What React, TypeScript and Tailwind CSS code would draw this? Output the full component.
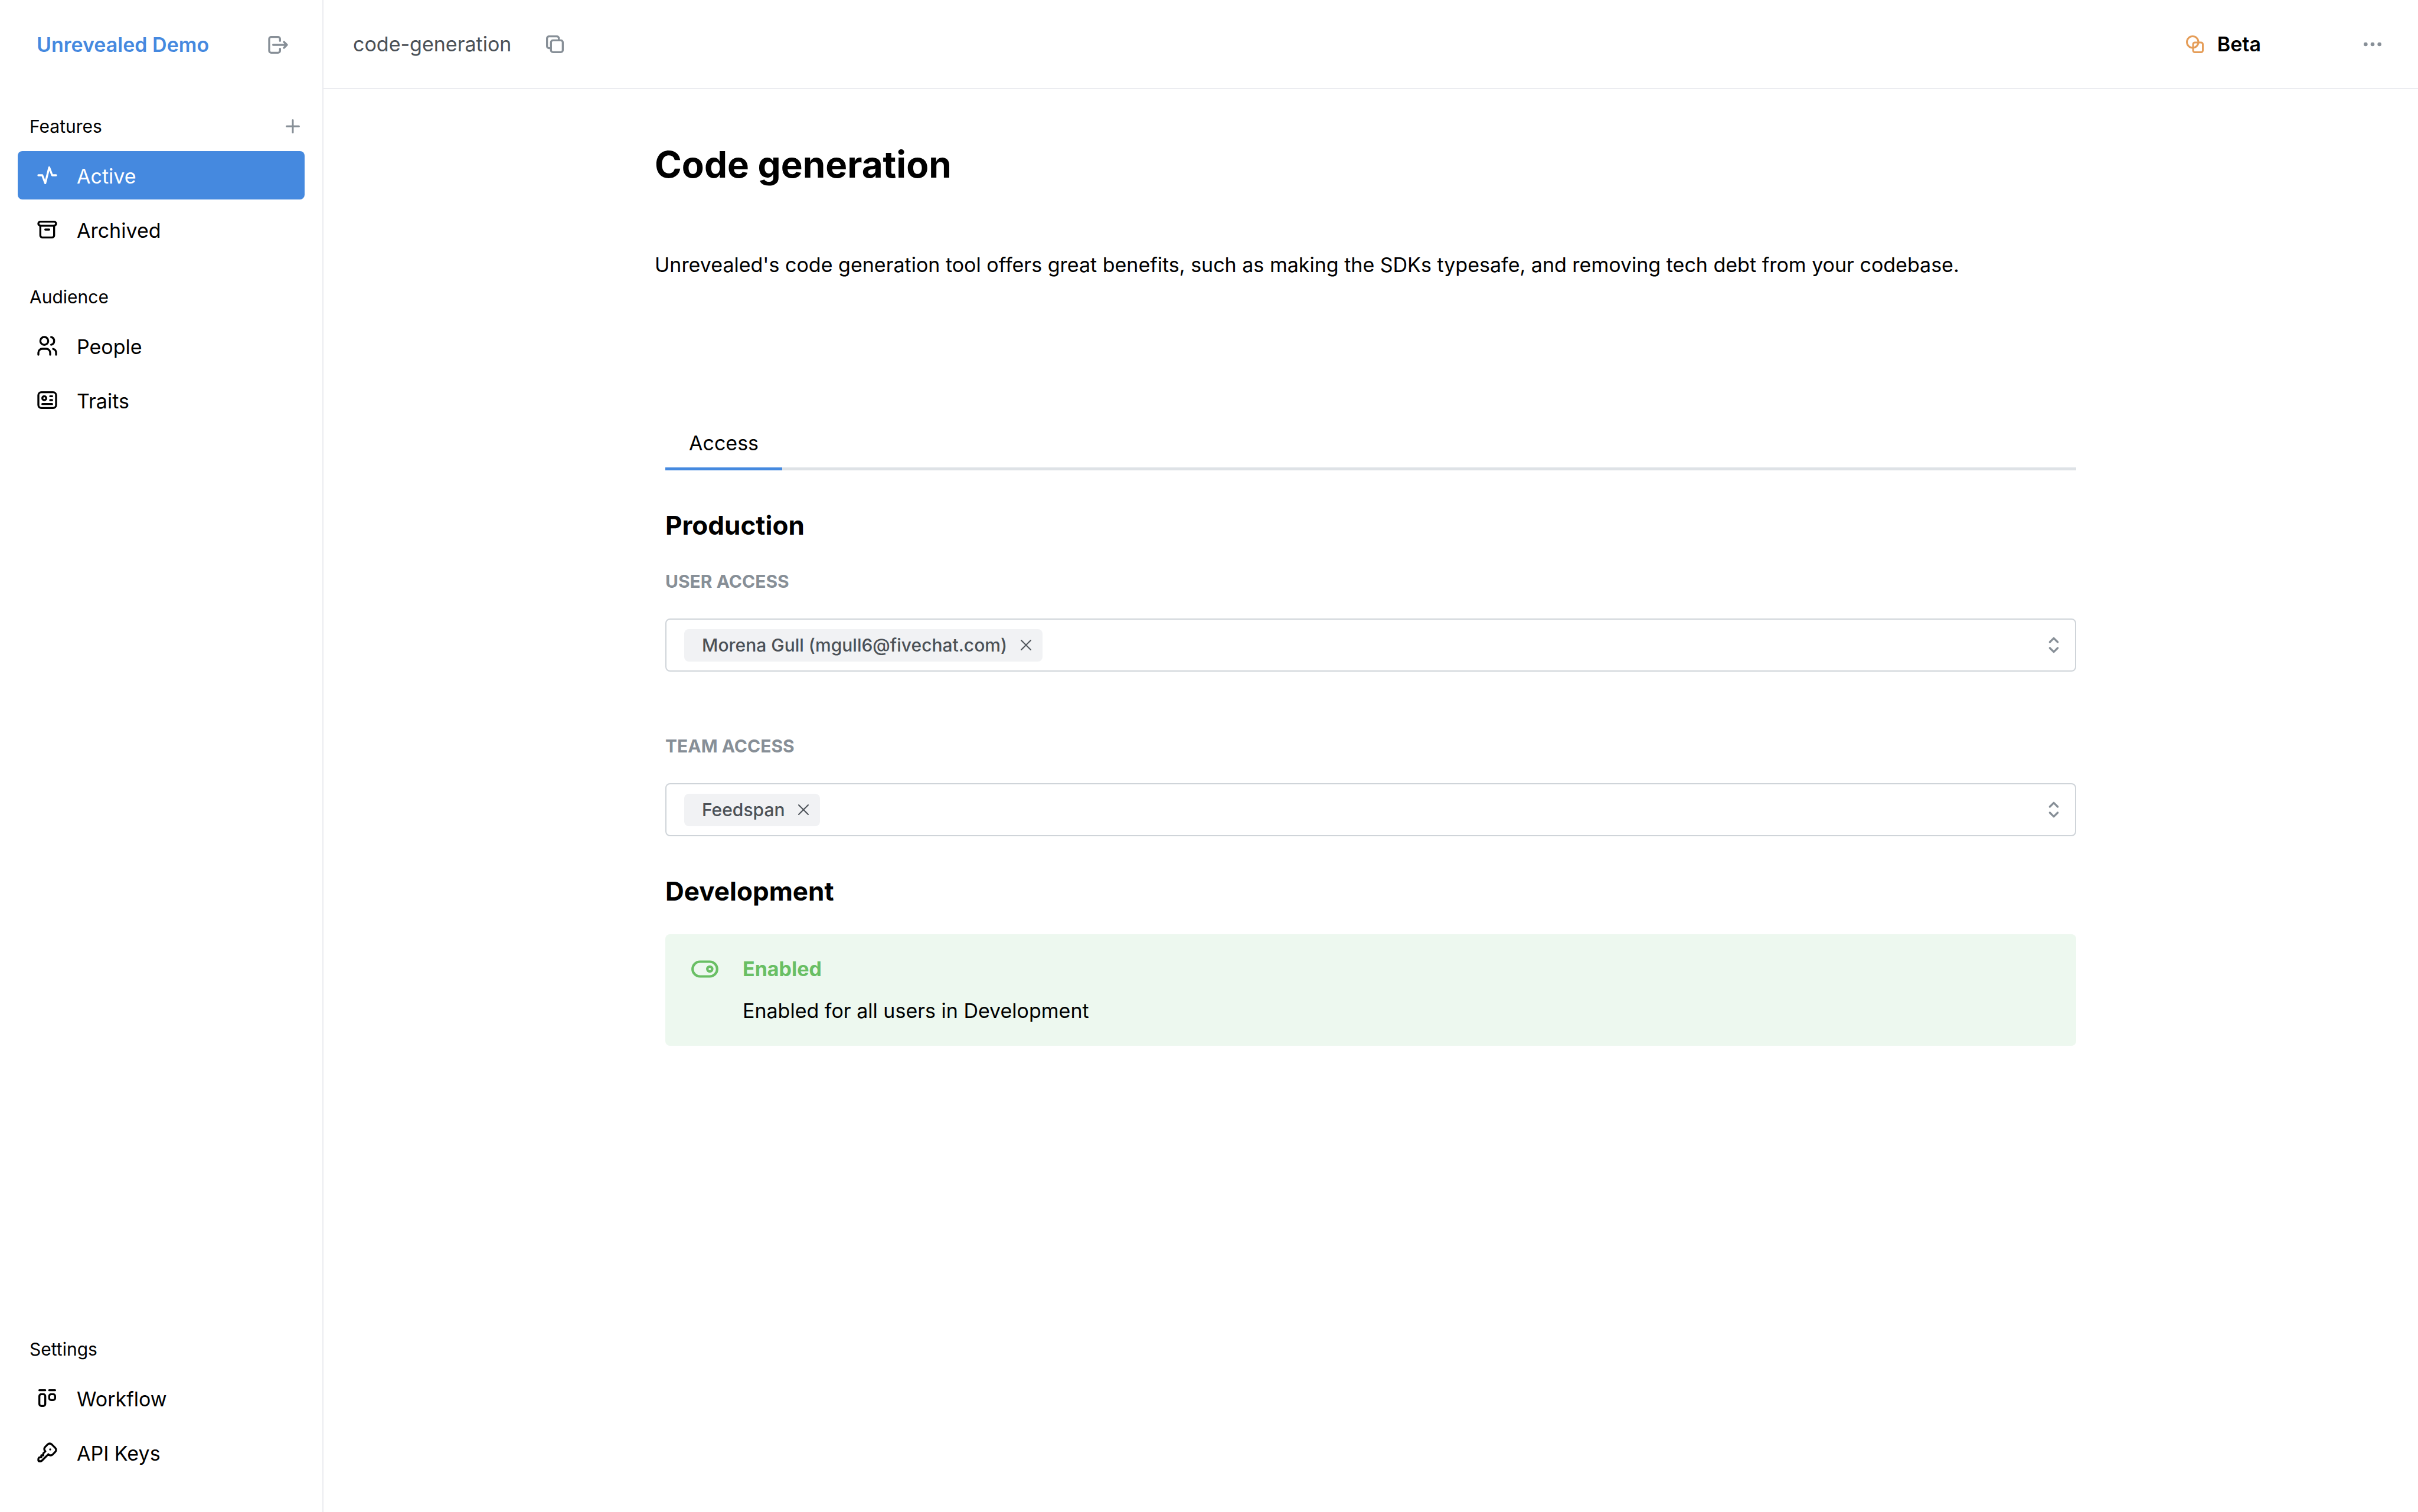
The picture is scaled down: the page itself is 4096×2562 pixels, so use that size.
import type { ReactNode } from "react";

type IconProps = { className: string; children: ReactNode; strokeWidth?: number };

function Icon({ className, children, strokeWidth = 2 }: IconProps) {
  return (
    <svg
      viewBox="0 0 24 24"
      fill="none"
      stroke="currentColor"
      strokeWidth={strokeWidth}
      strokeLinecap="round"
      strokeLinejoin="round"
      aria-hidden="true"
      className={`shrink-0 ${className}`}
    >
      {children}
    </svg>
  );
}

const icons = {
  activity: <path d="M3 12h4l3 8l4 -16l3 8h4" />,
  archive: (
    <>
      <rect x="3" y="4" width="18" height="4" rx="2" />
      <path d="M5 8v10a2 2 0 0 0 2 2h10a2 2 0 0 0 2 -2v-10" />
      <path d="M10 12h4" />
    </>
  ),
  users: (
    <>
      <circle cx="9" cy="7" r="4" />
      <path d="M3 21v-2a4 4 0 0 1 4 -4h4a4 4 0 0 1 4 4v2" />
      <path d="M16 3.13a4 4 0 0 1 0 7.75" />
      <path d="M21 21v-2a4 4 0 0 0 -3 -3.85" />
    </>
  ),
  id: (
    <>
      <rect x="3" y="4" width="18" height="16" rx="3" />
      <circle cx="9" cy="10" r="2" />
      <path d="M15 8h2M15 12h2M7 16h10" />
    </>
  ),
  kanban: (
    <>
      <path d="M4 4h6M14 4h6" />
      <rect x="4" y="8" width="6" height="12" rx="2" />
      <rect x="14" y="8" width="6" height="6" rx="2" />
    </>
  ),
  key: (
    <>
      <path d="M16.555 3.843l3.602 3.602a2.877 2.877 0 0 1 0 4.069l-2.643 2.643a2.877 2.877 0 0 1 -4.069 0l-.301 -.301l-6.558 6.558a2 2 0 0 1 -1.239 .578l-.175 .008h-1.172a1 1 0 0 1 -.993 -.883l-.007 -.117v-1.172a2 2 0 0 1 .467 -1.284l.119 -.13l.414 -.414h2v-2h2v-2l2.144 -2.144l-.301 -.301a2.877 2.877 0 0 1 0 -4.069l2.643 -2.643a2.877 2.877 0 0 1 4.069 0z" />
      <path d="M15 9h.01" />
    </>
  ),
};

function NavSection({ title, action, children }: { title: string; action?: ReactNode; children: ReactNode }) {
  return (
    <section>
      <div className="mb-[22px] flex h-10 items-center justify-between pr-0.5 pl-5">
        <h2 className="text-[30px] leading-10">{title}</h2>
        {action}
      </div>
      <ul className="flex flex-col gap-[10px]">{children}</ul>
    </section>
  );
}

function NavItem({ icon, label, active = false }: { icon: ReactNode; label: string; active?: boolean }) {
  return (
    <li>
      <a
        href="#"
        aria-current={active ? "page" : undefined}
        className={`flex h-[82px] items-center gap-[30px] rounded-lg px-[30px] text-[34px] ${active ? "bg-[#4589df] text-white" : "text-black"}`}
      >
        <Icon className="size-10">{icon}</Icon>
        <span className="pt-0.5">{label}</span>
      </a>
    </li>
  );
}

function AccessField({ id, label, tag }: { id: string; label: string; tag: string }) {
  return (
    <div>
      <label htmlFor={id} className="block text-[30px] leading-10 font-bold text-[#878f97] uppercase">
        {label}
      </label>
      <div className="mt-[43px] flex h-[90px] items-center rounded-lg border-2 border-[#cfd4d9] pr-4 pl-[30px]">
        <span className="flex h-[55px] shrink-0 items-center rounded-lg bg-[#f1f2f4] pr-4 pl-[30px] text-[30px] font-medium text-[#4b5157]">
          {tag}
          <button type="button" aria-label={`Remove ${tag}`} className="ml-5">
            <Icon className="size-6" strokeWidth={2}>
              <path d="M4 4l16 16M20 4l-16 16" />
            </Icon>
          </button>
        </span>
        <input id={id} type="text" className="min-w-0 flex-1 bg-transparent px-4 text-[30px] outline-none" />
        <Icon className="size-10 text-[#878f97]">
          <path d="M8 9l4 -4l4 4" />
          <path d="M16 15l-4 4l-4 -4" />
        </Icon>
      </div>
    </div>
  );
}

export default function App() {
  return (
    <div className="flex min-h-screen bg-white font-['Inter',sans-serif] text-black">
      <aside className="flex w-[548px] shrink-0 flex-col border-r-2 border-[#ebecf0] px-[30px] pb-[60px]">
        <div className="flex h-[151px] items-center justify-between pr-[25px] pl-8">
          <a href="#" className="text-[34px] font-semibold text-[#4589df]">
            Unrevealed Demo
          </a>
          <button type="button" aria-label="Log out" className="text-[#878f97]">
            <Icon className="size-10">
              <path d="M14 8v-2a2 2 0 0 0 -2 -2h-7a2 2 0 0 0 -2 2v12a2 2 0 0 0 2 2h7a2 2 0 0 0 2 -2v-2" />
              <path d="M7 12h14l-3 -3m0 6l3 -3" />
            </Icon>
          </button>
        </div>
        <nav className="flex flex-1 flex-col gap-[53px] pt-[43px]">
          <NavSection
            title="Features"
            action={
              <button type="button" aria-label="Add feature" className="text-[#878f97]">
                <Icon className="size-9">
                  <path d="M12 5v14M5 12h14" />
                </Icon>
              </button>
            }
          >
            <NavItem icon={icons.activity} label="Active" active />
            <NavItem icon={icons.archive} label="Archived" />
          </NavSection>
          <NavSection title="Audience">
            <NavItem icon={icons.users} label="People" />
            <NavItem icon={icons.id} label="Traits" />
          </NavSection>
          <div className="mt-auto">
            <NavSection title="Settings">
              <NavItem icon={icons.kanban} label="Workflow" />
              <NavItem icon={icons.key} label="API Keys" />
            </NavSection>
          </div>
        </nav>
      </aside>

      <div className="flex min-w-0 flex-1 flex-col">
        <header className="flex h-[151px] items-center border-b-2 border-[#ebecf0] pr-[57px] pl-[50px]">
          <span className="text-[34px] text-[#4b5157]">code-generation</span>
          <button type="button" aria-label="Copy key" className="ml-[54px] text-[#878f97]">
            <Icon className="size-10">
              <rect x="8" y="8" width="12" height="12" rx="2" />
              <path d="M16 8v-2a2 2 0 0 0 -2 -2h-8a2 2 0 0 0 -2 2v8a2 2 0 0 0 2 2h2" />
            </Icon>
          </button>
          <button type="button" className="mr-[169px] ml-auto flex items-center gap-5 text-[34px] font-semibold">
            <Icon className="size-9 text-[#e59d58]">
              <circle cx="9.5" cy="9.5" r="6.5" />
              <rect x="10" y="10" width="11" height="11" rx="2" />
            </Icon>
            Beta
          </button>
          <button type="button" aria-label="More actions" className="text-[#878f97]">
            <Icon className="size-10">
              <circle cx="5" cy="12" r="1" />
              <circle cx="12" cy="12" r="1" />
              <circle cx="19" cy="12" r="1" />
            </Icon>
          </button>
        </header>

        <main className="mx-auto w-full max-w-[2426px] pt-[88px]">
          <h1 className="text-[62px] leading-20 font-bold">Code generation</h1>
          <p className="mt-[102px] text-[34px] leading-14">
            Unrevealed's code generation tool offers great benefits, such as making the SDKs typesafe, and removing tech
            debt from your codebase.
          </p>

          <div className="mt-[231px] px-[18px]">
            <div role="tablist" className="flex bg-[linear-gradient(#dee2e6,#dee2e6)] bg-[length:100%_5px] bg-bottom bg-no-repeat">
              <button
                type="button"
                role="tab"
                aria-selected="true"
                className="h-[89px] border-b-5 border-[#4589df] px-10 text-[34px]"
              >
                Access
              </button>
            </div>

            <h2 className="mt-[63px] mb-[45px] text-[44px] leading-[60px] font-bold">Production</h2>
            <div className="flex flex-col gap-[106px]">
              <AccessField id="user-access" label="User access" tag="Morena Gull (mgull6@fivechat.com)" />
              <AccessField id="team-access" label="Team access" tag="Feedspan" />
            </div>

            <h2 className="mt-[63px] mb-[43px] text-[44px] leading-[60px] font-bold">Development</h2>
            <div className="flex gap-[39px] rounded-lg bg-[#edf8ef] px-[42px] py-8">
              <Icon className="mt-0.5 size-[50px] text-[#69bf64]">
                <circle cx="16" cy="12" r="2" />
                <rect x="2" y="6" width="20" height="12" rx="6" />
              </Icon>
              <div className="flex flex-col gap-[17px] text-[34px] leading-[54px]">
                <h3 className="font-bold text-[#69bf64]">Enabled</h3>
                <p>Enabled for all users in Development</p>
              </div>
            </div>
          </div>
        </main>
      </div>
    </div>
  );
}
